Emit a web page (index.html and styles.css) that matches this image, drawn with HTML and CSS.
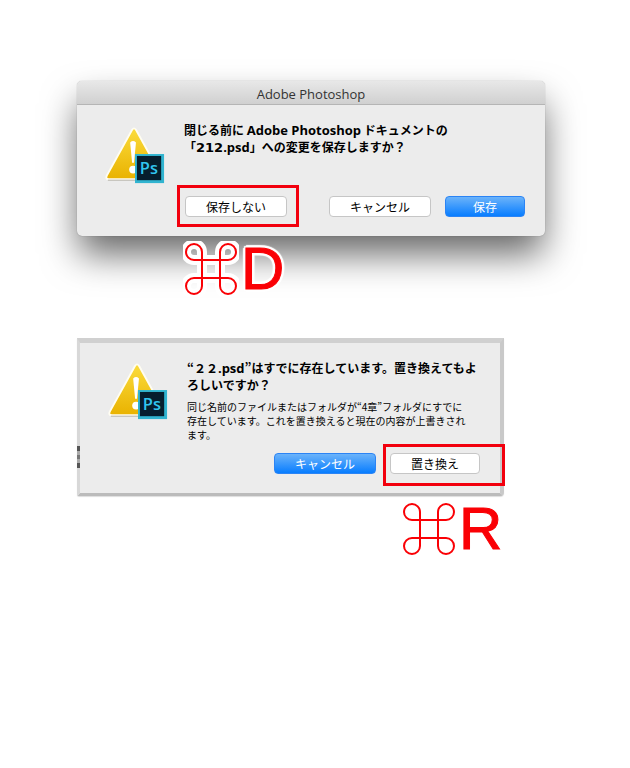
FILE: index.html
```html
<!DOCTYPE html>
<html lang="ja">

<head>
    <meta charset="UTF-8">
    <title>保存ダイアログのショートカット</title>
    <link rel="stylesheet" href="styles.css">
</head>

<body>
    <!-- Shared shapes -->
    <svg class="symbols" aria-hidden="true">
        <defs>
            <linearGradient id="yellow" x1="0" y1="0" x2="0" y2="1">
                <stop offset="0" stop-color="#fbdc3c" />
                <stop offset="1" stop-color="#e9b200" />
            </linearGradient>
        </defs>
        <symbol id="command" viewBox="0 0 56 56">
            <path d="M19 19V11A8 8 0 1 0 11 19H45A8 8 0 1 0 37 11V45A8 8 0 1 0 45 37H11A8 8 0 1 0 19 45Z" />
        </symbol>
        <symbol id="warning" viewBox="0 0 64 60">
            <path d="M33 4 59 51Q61 55 57 55H5Q1 55 3 51L29 4Q31 1 33 4Z" fill="url(#yellow)" stroke="#fffdf2" stroke-width="2" />
            <path d="M4 56H34" stroke="#b5b2a8" stroke-width="1" />
            <path d="M27 17Q30 14 33 17L31 38H29Z" fill="#fff" />
            <circle cx="30" cy="45" r="4" fill="#fff" />
            <rect x="32" y="29" width="30" height="30" fill="#31b4d0" />
            <rect x="34" y="31" width="25" height="25" fill="#061e2e" />
        </symbol>
    </svg>

    <main>
        <section class="dialog window">
            <h1 class="titlebar">Adobe Photoshop</h1>
            <div class="content">
                <svg class="icon" viewBox="0 0 64 60" role="img" aria-label="警告"><use href="#warning" /><text x="37" y="50" class="ps">Ps</text></svg>
                <div class="text">
                    <h2>閉じる前に <span class="latin">Adobe Photoshop</span> ドキュメントの<br>「<span class="digits">212</span><span class="latin">.psd</span>」への変更を保存しますか？</h2>
                </div>
            </div>
            <div class="buttons">
                <span class="marked"><button>保存しない</button></span>
                <button class="cancel">キャンセル</button>
                <button class="primary small">保存</button>
            </div>
        </section>
        <p class="shortcut outlined"><svg class="key" role="img" aria-label="Command"><use href="#command" class="halo" /><use href="#command" /></svg>D</p>

        <section class="dialog sheet">
            <div class="content">
                <svg class="icon" viewBox="0 0 64 60" role="img" aria-label="警告"><use href="#warning" /><text x="37" y="50" class="ps">Ps</text></svg>
                <div class="text">
                    <h2>“２２<span class="latin">.psd</span>”はすでに存在しています。置き換えてもよ<br>ろしいですか？</h2>
                    <p>同じ名前のファイルまたはフォルダが“4章”フォルダにすでに<br>存在しています。これを置き換えると現在の内容が上書きされ<br>ます。</p>
                </div>
            </div>
            <div class="buttons">
                <button class="primary">キャンセル</button>
                <span class="marked wide"><button class="replace">置き換え</button></span>
            </div>
        </section>
        <p class="shortcut second"><svg class="key" role="img" aria-label="Command"><use href="#command" /></svg>R</p>
    </main>
</body>

</html>
```

FILE: styles.css
```css
* {
    box-sizing: border-box;
}

body {
    margin: 0;
    background: white;
    color: black;
    font-family: "Open Sans", "Noto Sans CJK JP", sans-serif;
    font-size: 12px;
}

main {
    padding: 81px 85px 40px 77px;
}

h1,
h2,
p {
    margin: 0;
}

.symbols {
    position: absolute;
    width: 0;
    height: 0;
}

.dialog {
    background: #ececec;
}

.window {
    max-width: 468px;
    border-radius: 5px;
    box-shadow: 0 0 1px rgba(0, 0, 0, .4), 0 20px 36px -2px rgba(0, 0, 0, .6);
}

.titlebar {
    height: 24px;
    border-bottom: 1px solid #b5b5b5;
    border-radius: 5px 5px 0 0;
    background: linear-gradient(#e8e8e8, #d0d0d0);
    color: #333;
    font-size: 13px;
    font-weight: normal;
    line-height: 26px;
    text-align: center;
}

.content {
    display: flex;
    gap: 18px;
    padding: 16px 20px 0 27px;
}

.icon {
    flex: none;
    width: 62px;
    height: 60px;
    margin-top: 4px;
}

.ps {
    fill: #31c5f0;
    font-family: "Open Sans", sans-serif;
    font-size: 17px;
    font-weight: 600;
}

h2 {
    font-family: "Noto Sans CJK JP", sans-serif;
    font-size: 12px;
    font-weight: bold;
    line-height: 17px;
}

.latin {
    font-family: "Open Sans", sans-serif;
    font-size: 13px;
    line-height: 1;
}

.digits {
    font-family: "DejaVu Sans", sans-serif;
    font-size: 13px;
    line-height: 1;
}

.text p {
    margin-top: 7px;
    font-family: "Noto Sans CJK JP", sans-serif;
    font-size: 10px;
    line-height: 14px;
}

.buttons {
    display: flex;
    justify-content: flex-end;
    gap: 14px;
    padding: 11px 20px 19px;
}

button {
    display: block;
    width: 102px;
    height: 21px;
    padding: 0;
    border: 1px solid #c6c6c6;
    border-radius: 4px;
    background: white;
    color: black;
    font-family: "Noto Sans CJK JP", sans-serif;
    font-size: 12px;
    line-height: 18px;
}

.primary {
    border-color: #2b84f5;
    background: linear-gradient(#6bb3fa, #087dff);
    color: white;
}

.small {
    width: 80px;
}

.replace {
    width: 90px;
}

.cancel {
    margin-left: 28px;
}

.marked {
    position: relative;
}

/* red frame around the button */
.marked::after {
    content: "";
    position: absolute;
    inset: -11px -12px -10px -8px;
    border: 3px solid #f2000d;
    pointer-events: none;
}

.wide::after {
    inset: -9px -25px -12px -7px;
}

.shortcut {
    display: flex;
    align-items: center;
    gap: 2px;
    height: 66px;
    padding-left: 106px;
    color: #fa0005;
    font-family: "Liberation Sans", sans-serif;
    font-size: 60px;
    line-height: 66px;
    -webkit-text-stroke: 1px #fa0005;
}

.key {
    flex: none;
    width: 56px;
    height: 56px;
    overflow: visible;
    fill: none;
    stroke: #fa0005;
    stroke-width: 2;
}

.outlined {
    position: relative;
    text-shadow: 3px 0 1px white, -3px 0 1px white, 0 3px 1px white, 0 -3px 1px white, 2px 2px 1px white, -2px 2px 1px white, 2px -2px 1px white, -2px -2px 1px white;
}

.halo {
    stroke: white;
    stroke-width: 10;
}

.sheet {
    position: relative;
    max-width: 427px;
    margin-top: 36px;
    border: 3px solid #d8d8d8;
    border-top: 5px solid #d0d0d0;
    border-right: 4px solid #c9c9c9;
    border-bottom-color: #bbb;
    border-radius: 0 0 4px 2px;
    box-shadow: 0 1px 1px #ddd;
}

/* bit of the window behind the sheet */
.sheet::before {
    content: "";
    position: absolute;
    left: -3px;
    bottom: 25px;
    width: 3px;
    height: 22px;
    background: linear-gradient(#555 5px, #aaa 5px 9px, #777 9px 13px, #aaa 13px 17px, #555 17px);
}

.sheet .icon {
    margin-top: 2px;
}

.second {
    padding-left: 324px;
}
```
